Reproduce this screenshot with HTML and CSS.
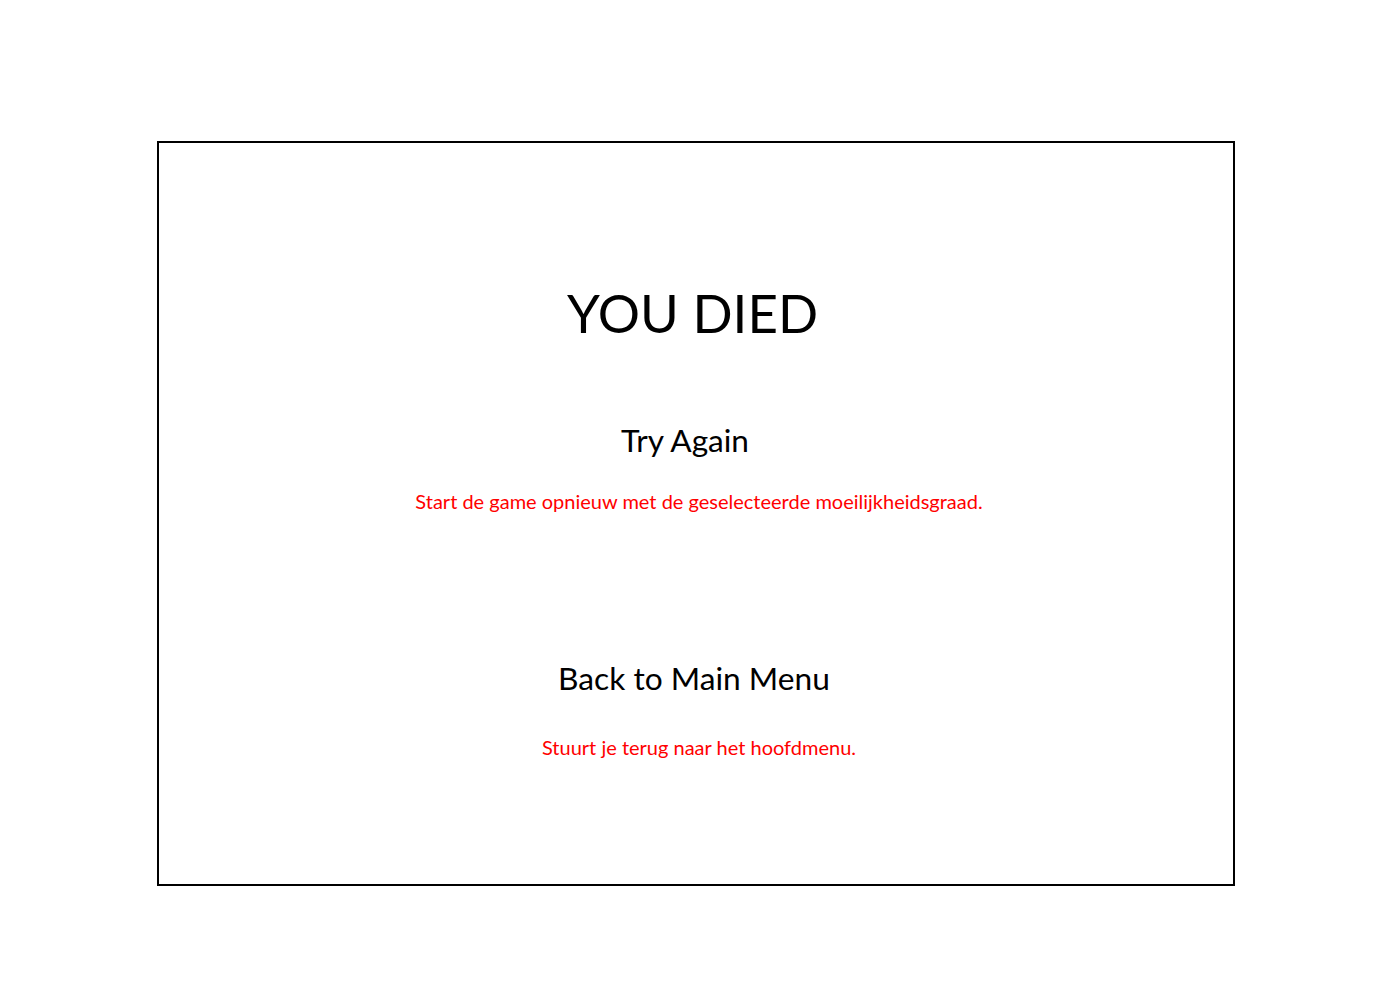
FILE: index.html
```html
<!DOCTYPE html>
<html lang="nl">
<head>
<meta charset="utf-8">
<title>You Died</title>
<link rel="stylesheet" href="styles.css">
</head>
<body>
<main class="screen">
  <h1 class="title">YOU DIED</h1>
  <section class="option option-retry">
    <h2 class="option-label label-retry">Try Again</h2>
    <p class="option-note note-retry">Start de game opnieuw met de geselecteerde moeilijkheidsgraad.</p>
  </section>
  <section class="option option-menu">
    <h2 class="option-label label-menu">Back to Main Menu</h2>
    <p class="option-note note-menu">Stuurt je terug naar het hoofdmenu.</p>
  </section>
</main>
</body>
</html>
```
FILE: styles.css
```css
html, body {
  margin: 0;
  padding: 0;
  background: #ffffff;
}

body {
  padding-top: 141px;
  padding-left: 157px;
  font-family: "Lato", "Open Sans", sans-serif;
  color: #000000;
}

.screen {
  box-sizing: border-box;
  width: 1078px;
  height: 745px;
  border: 2px solid #000000;
  display: flex;
  flex-direction: column;
  align-items: center;
  padding-top: 138px;
}

.title {
  margin: 0 7px 0 0;
  font-size: 52.8px;
  font-weight: 400;
  line-height: 1.2;
}

.option {
  display: flex;
  flex-direction: column;
  align-items: center;
}

.option-retry {
  margin-top: 77.5px;
}

.option-menu {
  margin-top: 145.4px;
}

.option-label {
  margin: 0;
  font-size: 31.6px;
  font-weight: 400;
  line-height: 1.2;
}

.option-note {
  margin: 0;
  font-size: 20px;
  line-height: 1.2;
  color: #ff0000;
}

.label-retry {
  margin-right: 22px;
}

.note-retry {
  margin-top: 29.6px;
  margin-left: 6px;
}

.label-menu {
  font-size: 31.7px;
  margin-right: 4px;
}

.note-menu {
  margin-top: 38.6px;
  margin-left: 6px;
}
```
